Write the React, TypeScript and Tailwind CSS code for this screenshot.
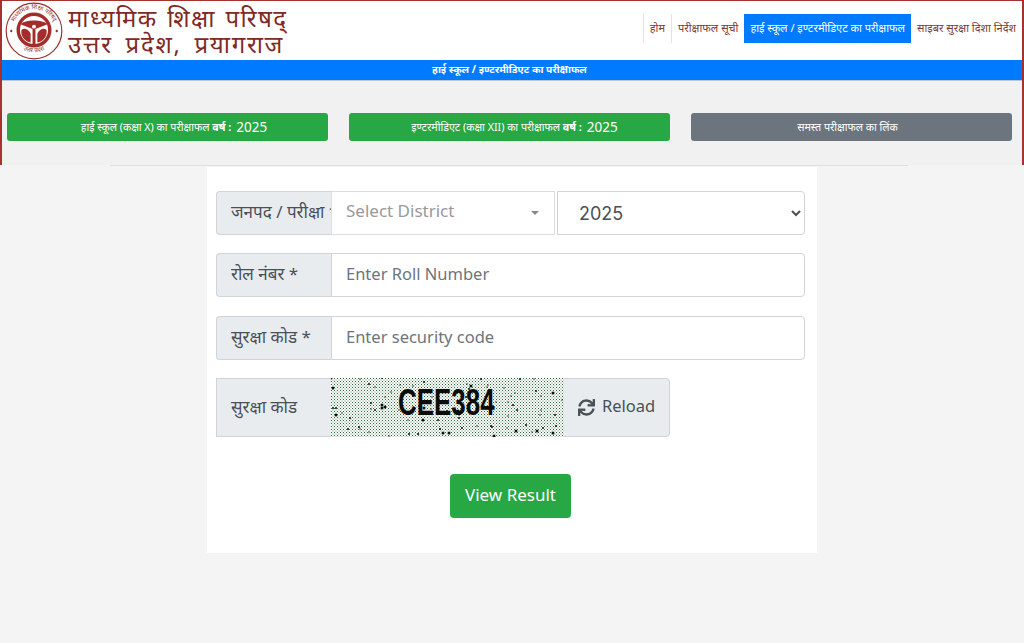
import { FaSync } from 'react-icons/fa';

const dots = Array.from({ length: 90 }, (_, i) => ({
  x: (i * 67 + (i * i) % 41) % 233,
  y: (i * 29 + (i * i * 3) % 23) % 59,
  r: i % 5 === 0 ? 1.5 : i % 2 === 0 ? 1 : 0.7,
}));

function Logo() {
  return (
    <svg viewBox="0 0 60 60" className="w-[58px] h-[58px] shrink-0">
      <defs>
        <path id="topArc" d="M8.5 34 A22 22 0 1 1 51.5 34" fill="none" />
        <path id="bottomArc" d="M13 45 A24 24 0 0 0 47 45" fill="none" />
      </defs>
      <circle cx="30" cy="30" r="28.8" fill="#fff" stroke="#9c2f2a" strokeWidth="1.2" />
      <text fontSize="6.2" fill="#8d2b27" fontFamily="'Noto Sans', sans-serif">
        <textPath href="#topArc" startOffset="50%" textAnchor="middle">माध्यमिक शिक्षा परिषद्</textPath>
      </text>
      <text fontSize="6.2" fill="#8d2b27" fontFamily="'Noto Sans', sans-serif">
        <textPath href="#bottomArc" startOffset="50%" textAnchor="middle">उत्तर प्रदेश</textPath>
      </text>
      <circle cx="30" cy="29" r="16.3" fill="#fff" stroke="#a32d2a" strokeWidth="3.6" />
      <path d="M16 23 C21 18 39 18 44 23 L31.5 28 V45 H28.5 V28 Z" fill="#a32d2a" />
      <path d="M17 29 C20 26 25 29 26.5 33 L26.5 42 C21 41 16 36 17 29 Z" fill="#a32d2a" />
      <path d="M43 29 C40 26 35 29 33.5 33 L33.5 42 C39 41 44 36 43 29 Z" fill="#a32d2a" />
      <circle cx="30" cy="25.5" r="2" fill="#fff" />
      <path d="M5 30 l1.5 -1.5 l1.5 1.5 l-1.5 1.5 Z M52 30 l1.5 -1.5 l1.5 1.5 l-1.5 1.5 Z" fill="#8d2b27" />
    </svg>
  );
}

function Captcha() {
  return (
    <div className="relative w-[233px] h-[59px] shrink-0 overflow-hidden bg-white">
      <svg viewBox="0 0 233 59" className="w-full h-full block">
        <defs>
          <pattern id="speckle" width="3" height="3" patternUnits="userSpaceOnUse">
            <rect width="1" height="1" x="0" y="0" fill="#2c6a3a" />
            <rect width="1" height="1" x="1.5" y="1.5" fill="#4f7c58" />
          </pattern>
        </defs>
        <rect width="233" height="59" fill="url(#speckle)" />
        {dots.map((d, i) => (
          <circle key={i} cx={d.x} cy={d.y} r={d.r} fill="#0c120d" />
        ))}
      </svg>
      <span className="absolute left-[67px] top-[4px] text-[36px] leading-[42px] font-bold text-[#0c0c0c] font-['Liberation_Sans',sans-serif] scale-x-[0.72] origin-left">
        CEE384
      </span>
    </div>
  );
}

function Label({ children }: { children: React.ReactNode }) {
  return (
    <div className="w-[115px] shrink-0 overflow-hidden whitespace-nowrap bg-[#e9ecef] border border-r-0 border-[#ced4da] rounded-l pl-[14px] pb-[3px] text-[17px] text-[#495057] flex items-center">
      {children}
    </div>
  );
}

function TextRow({ label, placeholder, className }: { label: string; placeholder: string; className: string }) {
  return (
    <div className={`flex h-11 ${className}`}>
      <Label>{label}</Label>
      <input
        placeholder={placeholder}
        className="flex-1 min-w-0 bg-white border border-[#ced4da] rounded-r px-[14px] pb-[2px] text-[16.5px] text-[#495057] placeholder:text-[#6c757d] outline-none"
      />
    </div>
  );
}

export default function App() {
  return (
    <div className="h-[643px] overflow-hidden bg-[#f4f4f4] font-['Noto_Sans','Open_Sans',sans-serif]">
      {/* Top section with the red frame */}
      <div className="h-[165px] border-t border-x-2 border-[#a5322e] bg-[#f1f1f1]">
        <div className="h-[59px] bg-white flex items-center justify-between pl-[3px] pr-[6px]">
          <div className="flex items-center gap-[5px]">
            <Logo />
            <div className="text-[#7f2a24] text-[24px] leading-[26px] whitespace-nowrap">
              <div className="tracking-[1.4px] [word-spacing:2px]">माध्यमिक शिक्षा परिषद्</div>
              <div className="tracking-[1.7px] [word-spacing:5px]">उत्तर प्रदेश, प्रयागराज</div>
            </div>
          </div>
          <nav className="flex items-center mb-[5px] text-[11px] text-[#7a3a35] whitespace-nowrap">
            <a className="h-[29px] flex items-center px-[6px] border-x border-[#e4e4e4]">होम</a>
            <a className="h-[29px] flex items-center px-[6px]">परीक्षाफल सूची</a>
            <a className="h-[29px] flex items-center px-[6px] bg-[#007bff] text-white">हाई स्कूल / इण्टरमीडिएट का परीक्षाफल</a>
            <a className="h-[29px] flex items-center pl-[6px]">साइबर सुरक्षा दिशा निर्देश</a>
          </nav>
        </div>
        <div className="h-[21px] bg-[#007bff] border-b border-[#b9c6d6] flex items-center justify-center pb-px pr-[5px] text-white text-[10.2px] font-bold">
          हाई स्कूल / इण्टरमीडिएट का परीक्षाफल
        </div>
        <div className="grid grid-cols-3 gap-[21px] pl-[5px] pr-[10px] pt-[32px]">
          <button className="h-[28px] rounded-[3px] bg-[#28a745] pl-[13px] text-white text-[10.7px] flex items-center justify-center gap-[5px] whitespace-nowrap">
            <span>हाई स्कूल (कक्षा X) का परीक्षाफल <b>वर्ष :</b></span>
            <span className="text-[13.5px]">2025</span>
          </button>
          <button className="h-[28px] rounded-[3px] bg-[#28a745] pl-[10px] text-white text-[10.7px] flex items-center justify-center gap-[5px] whitespace-nowrap">
            <span>इण्टरमीडिएट (कक्षा XII) का परीक्षाफल <b>वर्ष :</b></span>
            <span className="text-[13.5px]">2025</span>
          </button>
          <button className="h-[28px] rounded-[3px] bg-[#6c757d] text-white text-[10.7px] pr-2 flex items-center justify-center whitespace-nowrap">
            समस्त परीक्षाफल का लिंक
          </button>
        </div>
      </div>

      <div className="mx-[110px] w-[798px] h-px bg-[#dedede]" />

      {/* Form card */}
      <div className="w-[610px] h-[386px] ml-[207px] mt-px bg-white pt-6 pl-[9px] pr-[12px]">
        <div className="flex h-11">
          <Label>जनपद / परीक्षा *</Label>
          <div className="w-[224px] shrink-0 bg-white border border-[#ddd] flex items-center justify-between pl-[14px] pr-[15px] pb-[4px] text-[17px] text-[#999]">
            <span>Select District</span>
            <span className="w-0 h-0 mt-[4px] border-x-[4px] border-x-transparent border-t-[4px] border-t-[#888]" />
          </div>
          <select
            defaultValue="2025"
            className="ml-[2px] flex-1 min-w-0 bg-white border border-[#ced4da] rounded-r pl-[17px] text-[18px] text-[#495057] font-['Inter',sans-serif] outline-none"
          >
            <option>2025</option>
            <option>2024</option>
          </select>
        </div>

        <TextRow className="mt-[18px]" label="रोल नंबर *" placeholder="Enter Roll Number" />
        <TextRow className="mt-[19px]" label="सुरक्षा कोड *" placeholder="Enter security code" />

        <div className="flex h-[59px] mt-[18px]">
          <div className="w-[115px] shrink-0 bg-[#e9ecef] border border-r-0 border-[#ced4da] pl-[14px] pb-[2px] text-[17px] text-[#495057] flex items-center">
            सुरक्षा कोड
          </div>
          <Captcha />
          <button className="-ml-px w-[107px] bg-[#e9ecef] border border-[#ced4da] rounded-r flex items-center justify-center gap-[7px] pb-[2px] text-[16.5px] text-[#495057]">
            <FaSync className="w-[17px] h-[17px] mt-[2px]" />
            Reload
          </button>
        </div>

        <div className="flex justify-center mt-[37px]">
          <button className="w-[121px] h-11 rounded bg-[#28a745] pb-[2px] text-white text-[17px]">View Result</button>
        </div>
      </div>
    </div>
  );
}
